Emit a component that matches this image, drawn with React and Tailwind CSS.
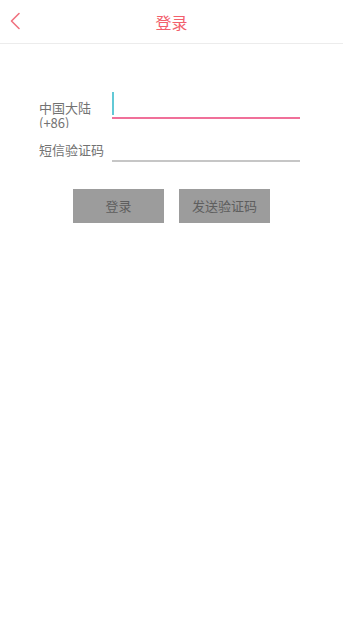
export default function App() {
  const font = { fontFamily: '"Noto Sans CJK SC", "Noto Sans", sans-serif' };
  return (
    <div className="w-[343px] h-[640px] bg-white overflow-hidden" style={font}>
      <div className="relative h-[44px] border-b border-[#ececec] flex items-center justify-center">
        <svg className="absolute left-[9px] top-[12px]" width="12" height="18" viewBox="0 0 12 18" fill="none">
          <path d="M10 1.5 L2.5 9 L10 16.5" stroke="#f0727f" strokeWidth="1.6" strokeLinecap="round" strokeLinejoin="round" />
        </svg>
        <span className="text-[16px] text-[#f2606c] leading-none">登录</span>
      </div>
      <div className="pl-[39px] pt-[46px]">
        <div className="flex items-start h-[37px]">
          <div className="w-[73px] h-[38px] pt-[10px] overflow-hidden text-[13px] leading-[15px] text-[#727272]">
            <div>中国大陆</div>
            <div>(+86)</div>
          </div>
          <div className="w-[188px] h-[29px] border-b-2 border-[#f07099] pt-[2px]">
            <div className="w-[1.5px] h-[23px] bg-[#62c9d6]" />
          </div>
        </div>
        <div className="flex items-end mt-[13px]">
          <div className="w-[73px] pb-[5px] text-[13px] leading-[15px] text-[#727272] whitespace-nowrap">短信验证码</div>
          <div className="w-[188px] h-[22px] border-b-2 border-[#c6c6c6]" />
        </div>
      </div>
      <div className="flex justify-center gap-[15px] mt-[27px]">
        <div className="w-[91px] h-[34px] bg-[#9c9c9c] flex items-center justify-center text-[13px] text-[#5e5e5e]">登录</div>
        <div className="w-[91px] h-[34px] bg-[#9c9c9c] flex items-center justify-center text-[13px] text-[#5e5e5e]">发送验证码</div>
      </div>
    </div>
  );
}
